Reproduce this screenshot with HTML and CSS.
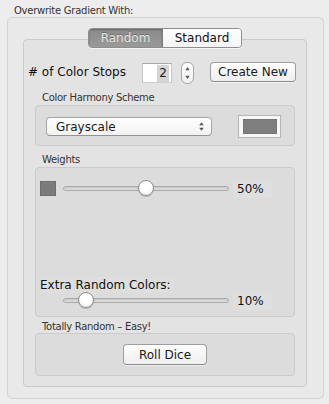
FILE: index.html
```html
<!DOCTYPE html>
<html>
<head>
<meta charset="utf-8">
<link rel="stylesheet" href="styles.css">
</head>
<body>
<div class="title">Overwrite Gradient With:</div>
<div class="outer">
  <div class="seg">
    <span class="seg-item on">Random</span><span class="seg-item off">Standard</span>
  </div>
  <div class="tabbox">
    <div class="stops">
      <span class="lbl-lg">#&nbsp;of Color Stops</span>
      <span class="field"><span class="sel">2</span></span>
      <span class="stepper">
        <svg width="13" height="22" viewBox="0 0 13 22"><path d="M4.3 8.2 L6.5 5 L8.7 8.2 Z" fill="#5a5a5a"/><path d="M4.3 13.8 L6.5 17 L8.7 13.8 Z" fill="#5a5a5a"/></svg>
      </span>
      <span class="btn create">Create New</span>
    </div>
    <div class="glabel">Color Harmony Scheme</div>
    <div class="group g1">
      <div class="popup">
        <span class="popup-text">Grayscale</span>
        <svg class="popup-arrows" width="7" height="11" viewBox="0 0 7 11"><path d="M1.2 4.3 L3.5 1.2 L5.8 4.3 Z" fill="#555"/><path d="M1.2 6.7 L3.5 9.8 L5.8 6.7 Z" fill="#555"/></svg>
      </div>
      <div class="well"><div class="well-swatch"></div></div>
    </div>
    <div class="glabel">Weights</div>
    <div class="group g2">
      <div class="srow">
        <span class="swatch"></span>
        <div class="slider"><div class="track"></div><div class="knob" style="--v:0.5"></div></div>
        <span class="pct">50%</span>
      </div>
      <div class="extra"><span class="extra-text">Extra Random Colors:</span></div>
      <div class="srow">
        <span class="swatch-space"></span>
        <div class="slider"><div class="track"></div><div class="knob" style="--v:0.1"></div></div>
        <span class="pct">10%</span>
      </div>
    </div>
    <div class="glabel g3lbl">Totally Random – Easy!</div>
    <div class="group g3">
      <span class="btn roll">Roll Dice</span>
    </div>
  </div>
</div>
</body>
</html>
```
FILE: styles.css
```css
* { box-sizing: border-box; }
html, body { margin: 0; padding: 0; }
body {
  background: #ededed;
  font-family: "DejaVu Sans", "Liberation Sans", sans-serif;
  color: #1a1a1a;
  width: 329px;
  height: 404px;
  overflow: hidden;
}
.title {
  height: 17px;
  padding: 4px 0 0 14px;
  font-size: 10px;
  line-height: 13px;
  letter-spacing: -0.25px;
  color: #333;
}
.outer {
  margin-left: 7px;
  width: 317px;
  height: 382px;
  border: 1px solid #d3d3d3;
  border-radius: 5px;
  background: #e9e9e9;
  padding: 10px 16px 0 15px;
}
.seg {
  position: relative;
  z-index: 1;
  display: flex;
  width: 154px;
  height: 20px;
  margin: 0 auto -9px auto;
  border: 1px solid #8d8d8d;
  border-radius: 4px;
  overflow: hidden;
  box-shadow: 0 1px 0 rgba(255,255,255,0.6);
}
.seg-item {
  display: flex;
  align-items: center;
  justify-content: center;
  font-size: 12px;
  height: 18px;
}
.seg-item.on {
  width: 74px;
  background: linear-gradient(#8a8a8a, #9a9a9a);
  color: #e4e4e4;
  text-shadow: 0 -1px 0 rgba(0,0,0,0.25);
  border-right: 1px solid #7e7e7e;
  box-shadow: inset 0 1px 2px rgba(0,0,0,0.25);
}
.seg-item.off {
  width: 78px;
  background: linear-gradient(#ffffff, #f4f4f4);
  color: #111;
}
.tabbox {
  width: 284px;
  height: 348px;
  border: 1px solid #cbcbcb;
  border-radius: 4px;
  background: #e3e3e3;
  padding-top: 22px;
}
.stops {
  display: flex;
  align-items: flex-start;
  height: 22px;
  padding-left: 4px;
  line-height: 20px;
}
.lbl-lg {
  width: 114px;
  font-size: 12px;
  color: #111;
  white-space: nowrap;
}
.field {
  margin-top: 1px;
  width: 30px;
  height: 20px;
  background: #fff;
  border-top: 1px solid #a9a9a9;
  border-left: 1px solid #c6c6c6;
  border-right: 1px solid #c6c6c6;
  border-bottom: 1px solid #d0d0d0;
  text-align: right;
  padding-right: 2px;
  font-size: 12px;
  line-height: 18px;
}
.sel {
  display: inline-block;
  background: #d4d4d4;
  padding: 0 2px;
  line-height: 17px;
}
.stepper {
  margin-left: 9px;
  width: 13px;
  height: 22px;
  border: 1px solid #a8a8a8;
  border-radius: 6px;
  background: linear-gradient(#ffffff, #f0f0f0);
  display: flex;
  align-items: center;
  justify-content: center;
  overflow: hidden;
}
.stepper svg { display: block; flex: none; }
.btn {
  display: flex;
  align-items: center;
  justify-content: center;
  border: 1px solid #9e9e9e;
  border-bottom-color: #8c8c8c;
  border-radius: 4px;
  background: linear-gradient(#fefefe, #eeeeee);
  box-shadow: 0 1px 0 rgba(255,255,255,0.5);
  font-size: 12px;
  color: #1a1a1a;
  white-space: nowrap;
}
.create {
  margin-left: 16px;
  width: 86px;
  height: 20px;
}
.glabel {
  height: 21px;
  padding: 7px 0 0 18px;
  font-size: 10px;
  line-height: 13px;
  letter-spacing: -0.3px;
  color: #333;
}
.group {
  margin: 0 11px;
  border: 1px solid #cbcbcb;
  border-radius: 4px;
  background: #dcdcdc;
}
.g1 {
  height: 41px;
  display: flex;
  align-items: center;
  padding: 2px 0 0 10px;
}
.popup {
  width: 166px;
  height: 19px;
  border: 1px solid #a6a6a6;
  border-bottom-color: #939393;
  border-radius: 4px;
  background: linear-gradient(#ffffff, #f2f2f2);
  display: flex;
  align-items: center;
  justify-content: space-between;
  padding: 0 6px 0 9px;
  font-size: 12px;
}
.popup-arrows { display: block; }
.well {
  margin-left: 26px;
  width: 43px;
  height: 23px;
  border: 1px solid #b4b4b4;
  background: #f7f7f7;
  padding: 3px 3px 3px 4px;
}
.well-swatch {
  width: 34px;
  height: 15px;
  background: #7f7f7f;
  border: 1px solid #757575;
}
.glabel:nth-of-type(2) { }
.g2 {
  height: 150px;
  padding-top: 10px;
}
.srow {
  display: flex;
  align-items: center;
  height: 20px;
  padding-left: 4px;
}
.swatch {
  width: 16px;
  height: 15px;
  background: #7b7b7b;
  border: 1px solid #6e6e6e;
}
.swatch-space { width: 16px; }
.slider {
  position: relative;
  margin-left: 7px;
  width: 166px;
  height: 20px;
}
.track {
  position: absolute;
  left: 0;
  right: 0;
  top: 8px;
  height: 5px;
  border-radius: 3px;
  background: linear-gradient(#c9c9c9, #dedede);
  border: 1px solid #a9a9a9;
}
.knob {
  position: absolute;
  top: 2px;
  left: calc(var(--v) * 150px);
  width: 16px;
  height: 16px;
  border-radius: 50%;
  background: radial-gradient(circle at 50% 35%, #ffffff 40%, #e8e8e8 100%);
  border: 1px solid #8f8f8f;
  box-shadow: 0 1px 1px rgba(0,0,0,0.2);
}
.pct {
  margin-left: 4px;
  width: 39px;
  height: 19px;
  background: #dfdfdf;
  padding-left: 4px;
  font-size: 12px;
  line-height: 20px;
  color: #111;
}
.extra {
  margin-top: 76px;
  height: 16px;
  padding-left: 4px;
}
.extra-text {
  display: inline-block;
  background: #dedede;
  font-size: 12px;
  line-height: 16px;
  color: #111;
  padding-right: 2px;
}
.g3lbl {
  height: 16px;
  padding-top: 3px;
}
.g3 {
  height: 43px;
  display: flex;
  align-items: center;
  justify-content: center;
}
.roll {
  width: 84px;
  height: 21px;
}
```
